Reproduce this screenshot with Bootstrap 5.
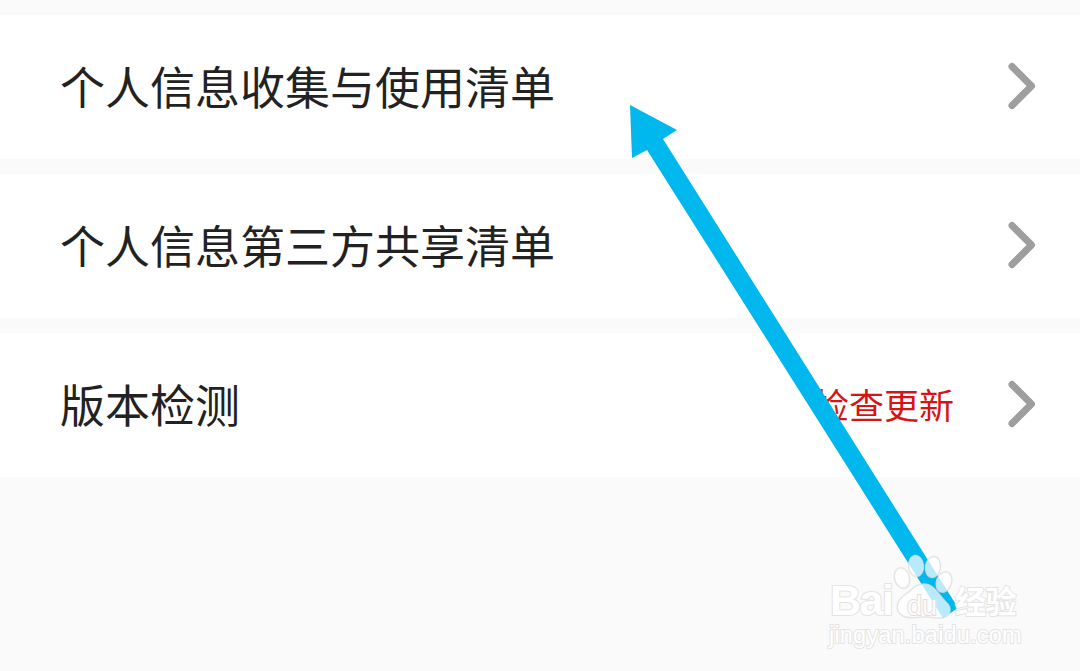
<!DOCTYPE html>
<html lang="zh"><head><meta charset="utf-8">
<link href="https://cdn.jsdelivr.net/npm/bootstrap@5.3.0/dist/css/bootstrap.min.css" rel="stylesheet">
<style>
html,body{height:100%;margin:0}
body{background:#fafafa;overflow:hidden;font-family:"Noto Sans CJK SC","Liberation Sans",sans-serif}
.screen{width:1080px;height:671px;position:relative;padding-top:15px;overflow:hidden}
.menu-stack{gap:15px}
.menu-row{height:144px;background:#fff;padding-left:60px;padding-right:44px}
.menu-label{font-size:45px;line-height:1;color:#222;margin-top:-4px}
.menu-value{font-size:35px;line-height:1;color:#d81313;margin-right:52px;margin-top:-4px}
.chev{width:30px;height:48px;display:block;margin-top:-2px}
.overlay{position:absolute;left:0;top:0;pointer-events:none}
.wm{position:absolute;color:#fff;-webkit-text-stroke:2px #e4e4e4;paint-order:stroke fill;white-space:nowrap;font-family:"Liberation Sans",sans-serif}
.wm-bai{left:830px;top:584px;height:32px;font-size:43px;line-height:32px;font-weight:700;letter-spacing:-1.5px}
.wm-du{left:907px;top:595px;height:22px;font-size:27px;line-height:22px;-webkit-text-stroke:2px #dedede;color:#fbfbfb}
.wm-cn{left:955px;top:584px;height:32px;font-size:31px;line-height:32px;font-family:"Noto Sans CJK SC",sans-serif;font-weight:700;letter-spacing:-.5px}
.wm-url{left:829px;top:623px;height:24px;font-size:23.5px;line-height:24px;letter-spacing:.2px}
</style></head>
<body>
<div class="screen">
 <div class="d-flex flex-column menu-stack">
  <div class="menu-row d-flex align-items-center justify-content-between">
   <span class="menu-label">个人信息收集与使用清单</span>
   <svg class="chev" viewBox="0 0 30 48"><path d="M6 4.500 L25.500 24 L6 43.500" fill="none" stroke="#9e9e9e" stroke-width="7" stroke-linecap="round" stroke-linejoin="round"/></svg>
  </div>
  <div class="menu-row d-flex align-items-center justify-content-between">
   <span class="menu-label">个人信息第三方共享清单</span>
   <svg class="chev" viewBox="0 0 30 48"><path d="M6 4.500 L25.500 24 L6 43.500" fill="none" stroke="#9e9e9e" stroke-width="7" stroke-linecap="round" stroke-linejoin="round"/></svg>
  </div>
  <div class="menu-row d-flex align-items-center">
   <span class="menu-label me-auto">版本检测</span>
   <span class="menu-value">检查更新</span>
   <svg class="chev" viewBox="0 0 30 48"><path d="M6 4.500 L25.500 24 L6 43.500" fill="none" stroke="#9e9e9e" stroke-width="7" stroke-linecap="round" stroke-linejoin="round"/></svg>
  </div>
 </div>
 <svg class="overlay" width="1080" height="671" viewBox="0 0 1080 671">
  <polygon points="630,105 677,130 663,139 955,603 958,608 943,618 647,150 632,158" fill="#00b7ee"/>
 </svg>
 <span class="wm wm-bai">Bai</span>
 <span class="wm wm-cn">经验</span>
 <span class="wm wm-url">jingyan.baidu.com</span>
 <svg class="overlay" width="1080" height="671" viewBox="0 0 1080 671">
  <g fill="#fff" fill-opacity=".72" stroke="#dedede" stroke-opacity=".8" stroke-width="1.500">
   <ellipse cx="902" cy="578" rx="7.500" ry="10.500" transform="rotate(-15 902 578)"/>
   <ellipse cx="916" cy="566" rx="7.500" ry="10.500" transform="rotate(-5 916 566)"/>
   <ellipse cx="933" cy="567" rx="7.500" ry="10.500" transform="rotate(8 933 567)"/>
   <ellipse cx="944" cy="582" rx="7.500" ry="10.500" transform="rotate(20 944 582)"/>
   <path d="M924 584 C934 584 938 594 945 601 C955 610 949 618 938 618 C931 618 928 616 922 617 C915 618 908 619 903 616 C893 610 897 600 906 594 C913 589 915 584 924 584 Z"/>
  </g>
 </svg>
 <span class="wm wm-du">du</span>
</div>
<script src="https://cdn.jsdelivr.net/npm/bootstrap@5.3.0/dist/js/bootstrap.bundle.min.js"></script>
</body></html>
